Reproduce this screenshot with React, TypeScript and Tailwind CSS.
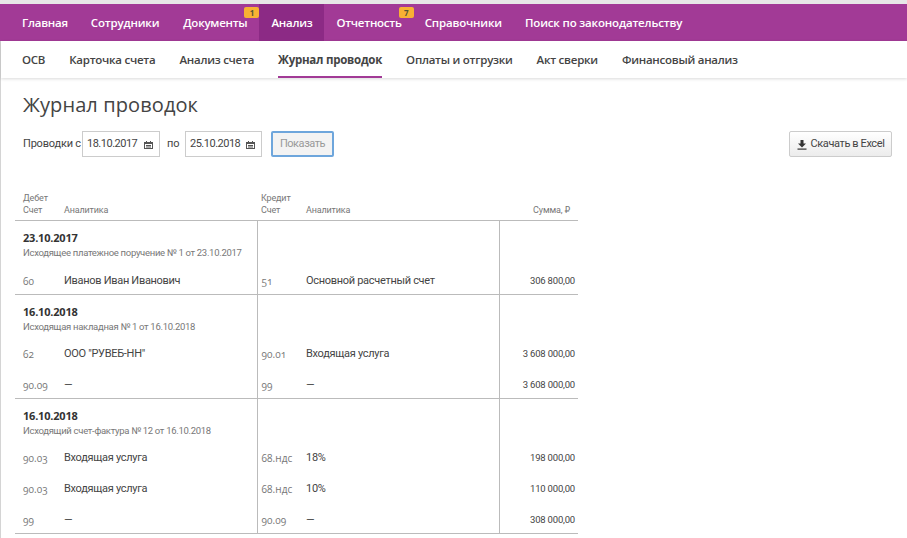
import React from "react";

const sans = "font-['Open_Sans',sans-serif]";
const body = "font-['Roboto',sans-serif]";

function Cal() {
  return (
    <svg width="9" height="8" viewBox="0 0 9 8" className="shrink-0 text-[#555]" fill="currentColor">
      <rect x="2" y="0" width="1" height="1" />
      <rect x="6" y="0" width="1" height="1" />
      <path d="M0 1h9v7H0V1zm1 2v4h7V3H1z" />
      <rect x="2" y="4" width="5" height="1" />
      <rect x="2" y="5.5" width="5" height="1" />
    </svg>
  );
}

function DownloadIcon() {
  return (
    <svg width="10" height="10" viewBox="0 0 10 10" className="shrink-0 text-[#333]" fill="currentColor">
      <path d="M3.5 0h3v3.5H9L5 7.5 1 3.5h2.5V0z" />
      <rect x="0.5" y="8.5" width="9" height="1.2" />
    </svg>
  );
}

function DateBox({ value, w }: { value: string; w: string }) {
  return (
    <div className={`${w} h-[26px] pt-px border border-[#ccc] flex items-center justify-between pl-[4px] pr-[6px] text-[11px] tracking-[-0.5px] text-[#444]`}>
      <span>{value}</span>
      <Cal />
    </div>
  );
}

function Acc({ children }: { children: React.ReactNode }) {
  return <span className="font-['Open_Sans',serif] [font-feature-settings:'onum'] text-[10px] tracking-[0.1px] text-[#777]">{children}</span>;
}

type Row = [string, string, string, string, string];

const cell = "align-bottom pb-[6px] leading-[14px]";

function Group({ date, doc, rows, titleH, heights }: { date: string; doc: string; rows: Row[]; titleH: string; heights: string[] }) {
  return (
    <>
      <tr className={`border-t border-[#bbb] ${titleH}`}>
        <td colSpan={2} className="pl-2 border-r border-[#bbb] align-top whitespace-nowrap">
          <div className={`${sans} text-[11px] font-bold leading-[17px] tracking-[-0.2px] text-[#333] pt-[8px]`}>{date}</div>
          <div className="text-[9.5px] leading-[14px] tracking-[-0.3px] text-[#777]">{doc}</div>
        </td>
        <td colSpan={2} className="border-r border-[#bbb]" />
        <td />
      </tr>
      {rows.map((r, i) => (
        <tr key={i} className={heights[i]}>
          <td className={`${cell} pl-2`}><Acc>{r[0]}</Acc></td>
          <td className={`${cell} border-r border-[#bbb] text-[11px] tracking-[-0.3px] text-[#444]`}>{r[1]}</td>
          <td className={`${cell} pl-1`}><Acc>{r[2]}</Acc></td>
          <td className={`${cell} border-r border-[#bbb] text-[11px] tracking-[-0.3px] text-[#444]`}>{r[3]}</td>
          <td className={`${cell} text-right pr-[3px] text-[9.5px] tracking-[-0.2px] text-[#444] whitespace-nowrap`}>{r[4]}</td>
        </tr>
      ))}
    </>
  );
}

export default function App() {
  const top = ["Главная", "Сотрудники", "Документы", "Анализ", "Отчетность", "Справочники", "Поиск по законодательству"];
  const badges: Record<string, string> = { "Документы": "1", "Отчетность": "7" };
  const sub = ["ОСВ", "Карточка счета", "Анализ счета", "Журнал проводок", "Оплаты и отгрузки", "Акт сверки", "Финансовый анализ"];
  const tight = ["Сотрудники", "Справочники", "Поиск по законодательству"];
  return (
    <div className={`${body} w-[907px] h-[538px] overflow-hidden bg-white pt-1 bg-[linear-gradient(#e7e7e7,#e7e7e7)] bg-no-repeat bg-[length:100%_4px]`}>
      <nav className={`${sans} h-[37px] bg-[#a23a96] flex pl-[10px] text-[11.5px] font-semibold text-white`}>
        {top.map((t) => (
          <div key={t} className={`relative h-full flex items-center whitespace-nowrap ${tight.includes(t) ? "pl-[11px] pr-[12px] tracking-[-0.17px]" : "px-3 tracking-[-0.25px]"} ${t === "Анализ" ? "bg-[#8c2a85]" : ""}`}>
            {t}
            {badges[t] && (
              <span className="absolute top-[3px] right-0 w-[15px] h-[11px] rounded-[2px] bg-[#f8b133] text-[#553] text-[8px] leading-[11px] text-center font-bold">{badges[t]}</span>
            )}
          </div>
        ))}
      </nav>
      <div className="border-l border-[#d4d4d4] h-[497px]">
        <div className={`${sans} h-[37px] flex pl-[21px] gap-6 text-[11.5px] font-semibold text-[#444] shadow-[0_1px_3px_rgba(0,0,0,0.15)]`}>
          {sub.map((t) => (
            <div key={t} className={`h-full flex items-center tracking-[-0.25px] whitespace-nowrap ${t === "Журнал проводок" ? "border-b-2 border-[#a23a96] pt-[2px] font-bold" : ""}`}>{t}</div>
          ))}
        </div>
        <div className="pl-[22px] pr-[15px]">
          <h1 className={`${sans} text-[20px] leading-[28px] pt-[13px] text-[#444] tracking-[0.1px]`}>Журнал проводок</h1>
          <div className="flex items-center mt-[12px] text-[11px] text-[#444] whitespace-nowrap">
            <span className="w-[59px] pt-px tracking-[-0.2px]">Проводки с</span>
            <DateBox value="18.10.2017" w="w-[78px]" />
            <span className="ml-[7px] w-[18px] pt-px">по</span>
            <DateBox value="25.10.2018" w="w-[77px]" />
            <button className="ml-[9px] w-[63px] h-[26px] pt-px rounded-[2px] border-2 border-[#6ea6dc] bg-[#f3f3f3] text-[#999] text-[11px] tracking-[-0.45px]">Показать</button>
            <button className="ml-auto w-[103px] h-[26px] pt-px rounded-[2px] border border-[#ccc] bg-gradient-to-b from-white to-[#ececec] flex items-center justify-center gap-[4px] text-[11px] tracking-[-0.4px] text-[#444]">
              <DownloadIcon />
              Скачать в Excel
            </button>
          </div>
        </div>
        <table className="ml-[14px] mt-[35px] w-[563px] table-fixed border-collapse border-b border-[#bbb]">
          <colgroup>
            <col className="w-[49px]" />
            <col className="w-[193px]" />
            <col className="w-[49px]" />
            <col className="w-[193px]" />
            <col className="w-[79px]" />
          </colgroup>
          <thead>
            <tr className="text-[9px] leading-[12px] tracking-[-0.15px] text-[#777] font-normal">
              <th className="pl-2 pb-[4px] font-normal text-left align-bottom">Дебет<br />Счет</th>
              <th className="pb-[4px] font-normal text-left align-bottom">Аналитика</th>
              <th className="pl-1 pb-[4px] font-normal text-left align-bottom">Кредит<br />Счет</th>
              <th className="pb-[4px] font-normal text-left align-bottom">Аналитика</th>
              <th className="pr-2 pb-[4px] font-normal text-right align-bottom">Сумма, <span className="font-['DejaVu_Sans',sans-serif]">₽</span></th>
            </tr>
          </thead>
          <tbody>
            <Group date="23.10.2017" doc="Исходящее платежное поручение № 1 от 23.10.2017" titleH="h-[46px]"
              heights={["h-[28px]"]}
              rows={[["60", "Иванов Иван Иванович", "51", "Основной расчетный счет", "306 800,00"]]} />
            <Group date="16.10.2018" doc="Исходящая накладная № 1 от 16.10.2018" titleH="h-[42px]"
              heights={["h-[30px]", "h-[32px]"]}
              rows={[["62", "ООО \"РУВЕБ-НН\"", "90.01", "Входящая услуга", "3 608 000,00"], ["90.09", "—", "99", "—", "3 608 000,00"]]} />
            <Group date="16.10.2018" doc="Исходящий счет-фактура № 12 от 16.10.2018" titleH="h-[42px]"
              heights={["h-[30px]", "h-[31px]", "h-[32px]"]}
              rows={[["90.03", "Входящая услуга", "68.ндс", "18%", "198 000,00"], ["90.03", "Входящая услуга", "68.ндс", "10%", "110 000,00"], ["99", "—", "90.09", "—", "308 000,00"]]} />
          </tbody>
        </table>
      </div>
    </div>
  );
}
